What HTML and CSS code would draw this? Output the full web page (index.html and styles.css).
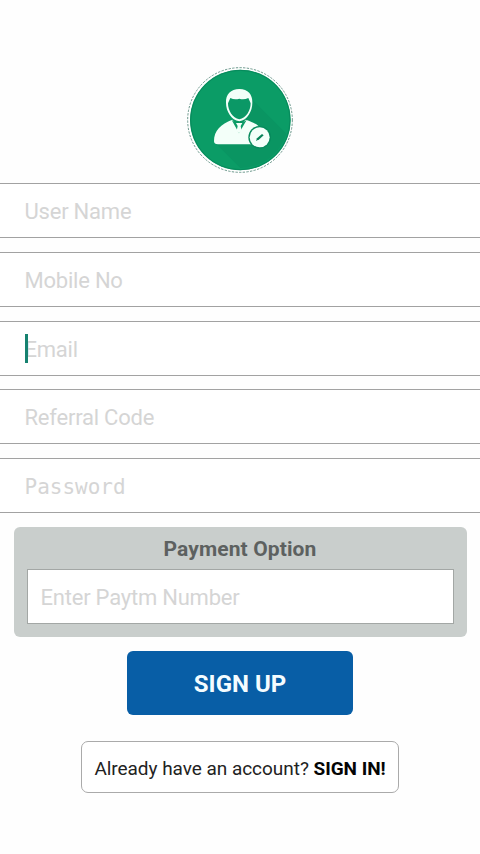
FILE: index.html
```
<!DOCTYPE html>
<html lang="en">
<head>
<meta charset="utf-8">
<title>Sign Up</title>
<link rel="stylesheet" href="styles.css">
</head>
<body>
<main class="screen">
  <svg class="avatar" viewBox="0 0 360 360" aria-hidden="true">
    <circle cx="180" cy="180" r="157" fill="#fff" stroke="#55887a" stroke-width="2.6" stroke-dasharray="7 4"/>
    <circle cx="181" cy="180" r="151" fill="#0b9c66"/>
    <path d="M212 114L319 221A144 144 0 0 1 181 324L110 253L170 190Z" fill="#0a9562"/>
    <circle cx="181" cy="180" r="149" fill="none" stroke="#078a5c" stroke-width="3"/>
    <path d="M102 244C102 211 122 193 157 179L176 202L197 179C224 188 239 197 246 212L222 253H114Q102 253 102 244Z" fill="#f3fff9"/>
    <path d="M155 180L177 220L200 180L184 190H170Z" fill="#0b9c66"/>
    <path d="M168 189H187L182 198L185 212L177 220L170 212L173 198Z" fill="#f3fff9"/>
    <path d="M138 128C137 103 152 87 178 87C204 87 218 104 217 128C217 154 202 180 178 184C154 180 138 154 138 128Z" fill="#f3fff9"/>
    <path d="M151 114Q164 121 178 116Q191 121 205 114L212 130C212 151 199 174 178 178C157 174 144 151 144 130Z" fill="#0b9866"/>
    <circle cx="239" cy="232" r="34" fill="#078a5c"/>
    <circle cx="239" cy="232" r="30" fill="#f3fff9"/>
    <path d="M228 243L231 235L246 222L251 226L238 238Z" fill="#078258"/>
  </svg>
  <form class="form">
    <div class="field"><span class="hint">User Name</span></div>
    <div class="field"><span class="hint">Mobile No</span></div>
    <div class="field field-active"><span class="hint">Email</span></div>
    <div class="field"><span class="hint">Referral Code</span></div>
    <div class="field"><span class="hint hint-mono">Password</span></div>
  </form>
  <section class="payment">
    <h2 class="payment-title">Payment Option</h2>
    <div class="payment-input"><span class="hint">Enter Paytm Number</span></div>
  </section>
  <button class="signup">SIGN UP</button>
  <a class="signin">Already have an account? <b>SIGN IN!</b></a>
</main>
</body>
</html>
```
FILE: styles.css
```
* { box-sizing: border-box; }
body {
  margin: 0;
  background: #fefefe;
  font-family: Roboto, "Liberation Sans", sans-serif;
}
.screen {
  height: 854px;
  padding-top: 60px;
  display: flex;
  flex-direction: column;
  align-items: center;
  overflow: hidden;
}
.avatar { width: 120px; height: 120px; flex: none; }
.form {
  width: 100%;
  margin-top: 3px;
  display: grid;
  grid-auto-rows: 55px;
  row-gap: 13.75px;
}
.field {
  position: relative;
  display: flex;
  align-items: center;
  padding: 3px 25px 0 24.5px;
  background: #fff;
  border-top: 1px solid #a2a2a2;
  border-bottom: 1px solid #a2a2a2;
}
.hint {
  color: #d5d5d5;
  font-size: 22px;
  line-height: 26px;
  letter-spacing: -0.22px;
  white-space: nowrap;
}
.hint-mono {
  font-family: "DejaVu Sans Mono", monospace;
  font-size: 21px;
  letter-spacing: 0;
}
.field-active::before {
  content: "";
  position: absolute;
  left: 24.5px;
  top: 12px;
  width: 3px;
  height: 29px;
  background: #168270;
}
.payment {
  width: 453px;
  height: 110px;
  margin-top: 14px;
  padding: 8px 13px 0;
  border-radius: 6px;
  background: #c9cecc;
}
.payment-title {
  margin: 0 0 6px;
  font-size: 21px;
  line-height: 28px;
  font-weight: 700;
  letter-spacing: 0.12px;
  text-align: center;
  color: #5d6160;
}
.payment-input {
  height: 55px;
  padding: 2px 13px 0;
  display: flex;
  align-items: center;
  background: #fff;
  border: 1px solid #a3a7a5;
}
.signup {
  width: 226px;
  height: 64px;
  margin-top: 14px;
  padding: 2px 0 0;
  border: 0;
  border-radius: 6px;
  background: #085ea6;
  color: #f4fcff;
  font: 700 24px Roboto, "Liberation Sans", sans-serif;
}
.signin {
  width: 318px;
  height: 52px;
  margin-top: 26px;
  padding-top: 1px;
  border: 1px solid #aaa;
  border-radius: 7px;
  background: #fff;
  color: #222;
  font-size: 19px;
  line-height: 51px;
  letter-spacing: -0.04px;
  text-align: center;
  white-space: nowrap;
}
.signin b { color: #050505; }
```
